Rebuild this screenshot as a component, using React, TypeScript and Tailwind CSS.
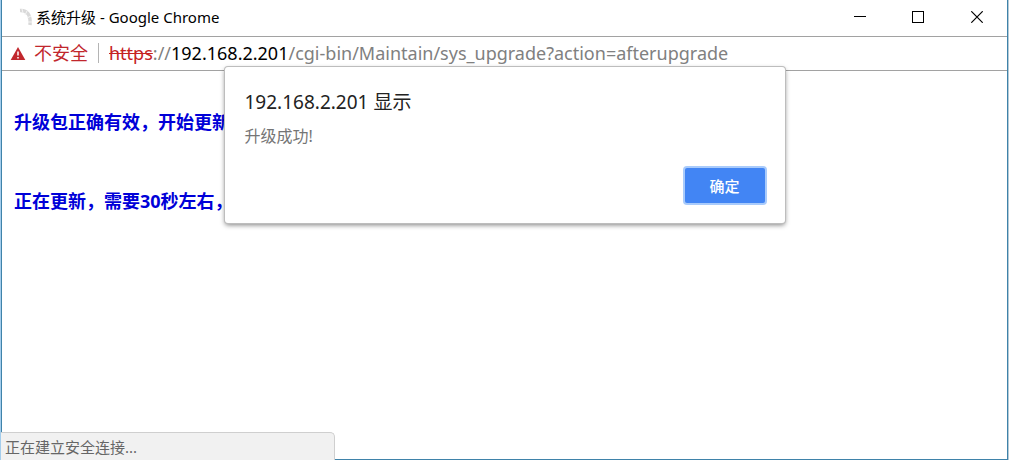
import React from "react";

function TitleBar() {
  return (
    <header className="flex h-9 items-center pl-4">
      <svg className="h-5 w-4 shrink-0" viewBox="0 0 16 20" fill="none" aria-hidden="true">
        <path d="M2 2.5C9 2 13 7 12 17" stroke="#d9d9d9" strokeWidth="3.5" />
        <path d="M4 1L5 5M9 3L7 7M13 8L9 10M14 14L10 14" stroke="#f5f5f5" strokeWidth="1" />
      </svg>
      <h1 className="ml-0.5 pb-0.5 text-[15px] leading-5 text-black">系统升级 - Google Chrome</h1>
      <div className="ml-auto flex h-full items-center">
        <button type="button" aria-label="最小化" className="flex h-full w-[58px] items-center justify-center pb-0.5">
          <svg width="12" height="12" viewBox="0 0 12 12" shapeRendering="crispEdges">
            <path d="M0 5.5H12" stroke="#000" />
          </svg>
        </button>
        <button type="button" aria-label="最大化" className="flex h-full w-[58px] items-center justify-center pb-0.5">
          <svg width="12" height="12" viewBox="0 0 12 12" fill="none" shapeRendering="crispEdges">
            <rect x="0.5" y="0.5" width="11" height="11" stroke="#000" />
          </svg>
        </button>
        <button type="button" aria-label="关闭" className="flex h-full w-[60px] items-center justify-center pb-0.5">
          <svg width="12" height="12" viewBox="0 0 12 12" fill="none">
            <path d="M0.3 0.3L11.7 11.7M11.7 0.3L0.3 11.7" stroke="#000" strokeWidth="1.2" />
          </svg>
        </button>
      </div>
    </header>
  );
}

function AddressBar() {
  return (
    <div className="flex h-[35px] items-center border-y border-[#a2a2a2] pb-0.5 pl-2 text-lg leading-6 whitespace-nowrap">
      <svg className="h-4 w-4 shrink-0" viewBox="0 0 16 16" aria-hidden="true">
        <path d="M8 2L15.3 15H0.7Z" fill="#c1272d" />
        <path d="M8 6.5V10.5M8 12V13.5" stroke="#fff" strokeWidth="1.5" />
      </svg>
      <span className="ml-2 text-[#c1272d]">不安全</span>
      <span className="mx-2.5 h-5 w-px bg-[#b4b4b4]" />
      <p className="text-[#808080]">
        <s className="text-[#c5221f]">https</s>://<span className="text-black">192.168.2.201</span>
        /cgi-bin/Maintain/sys_upgrade?action=afterupgrade
      </p>
    </div>
  );
}

function AlertDialog() {
  return (
    <div
      role="alertdialog"
      aria-labelledby="alert-title"
      aria-describedby="alert-message"
      className="absolute top-[67px] left-1/2 flex w-[560px] -translate-x-1/2 flex-col rounded-[3px] bg-white px-5 pt-[23px] pb-5 shadow-[0_0_0_1px_#bdbdbd,0_2px_5px_rgba(0,0,0,0.5)]"
    >
      <h2 id="alert-title" className="text-[19px] leading-6 text-[#222]">192.168.2.201 显示</h2>
      <p id="alert-message" className="mt-2.5 text-base leading-6 text-[#757575]">升级成功!</p>
      <button
        type="button"
        className="mt-5 h-[35px] w-20 self-end rounded-[2px] bg-[#4285f4] pt-0.5 text-[15px] font-medium text-white ring-2 ring-[#a9cbfb]"
      >
        确定
      </button>
    </div>
  );
}

export default function App() {
  return (
    <div className="relative flex h-screen flex-col overflow-hidden border-r border-l border-r-[#b5cad6] border-l-[#a4cdec] bg-white font-['Noto_Sans','Noto_Sans_CJK_SC',sans-serif]">
      <div className="flex flex-1 flex-col border-x border-b border-[#3f83aa]">
        <TitleBar />
        <AddressBar />
        <main className="flex flex-col gap-[55px] px-3 pt-[39px] text-lg leading-6 font-bold whitespace-nowrap text-[#0000d8]">
          <p>升级包正确有效，开始更新</p>
          <p>正在更新，需要30秒左右，</p>
        </main>
      </div>
      <AlertDialog />
      <div
        role="status"
        className="absolute bottom-0 left-0 h-7 w-[334px] rounded-tr-[5px] border-t border-r border-[#cfcfcf] bg-[#f1f1f1] pl-1 text-[15px] leading-7 text-[#666]"
      >
        正在建立安全连接...
      </div>
    </div>
  );
}
